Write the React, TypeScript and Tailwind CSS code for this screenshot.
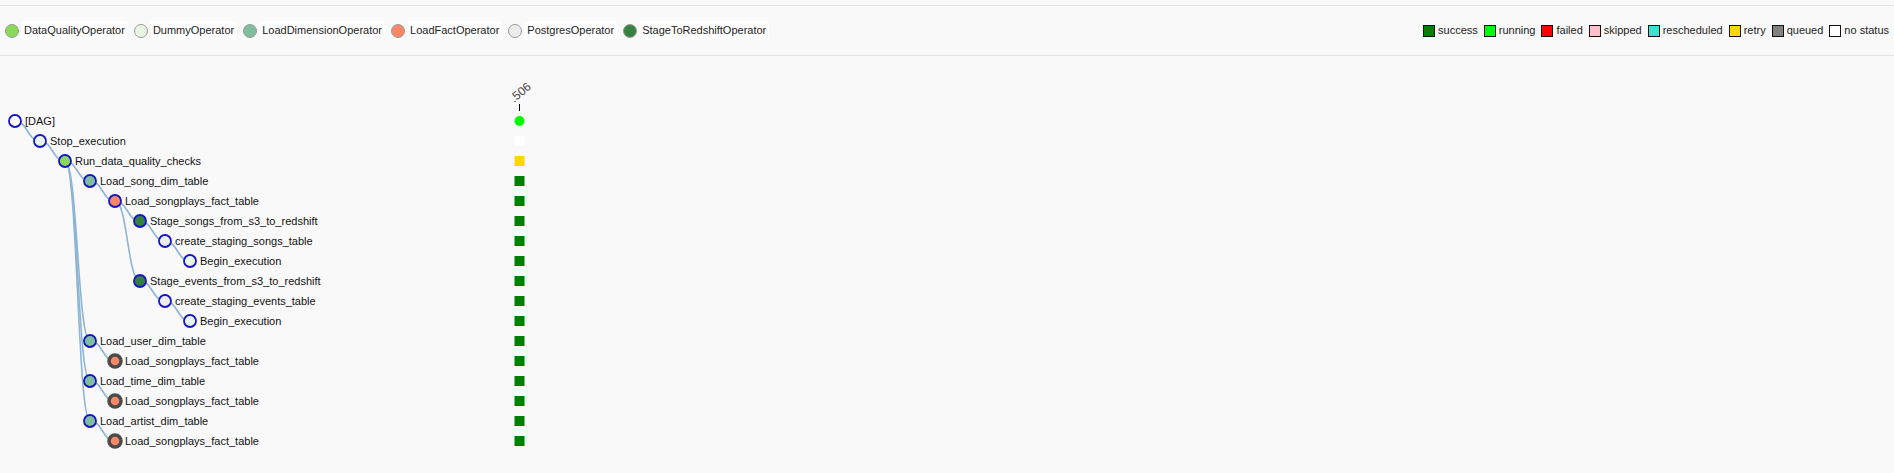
import React from "react";

interface INode {
  name: string;
  depth: number;
  parent: number;
  fill: string;
  collapsed?: boolean;
  status: string;
}

const OPERATORS = [
  { name: "DataQualityOperator", color: "#89DA59" },
  { name: "DummyOperator", color: "#e8f7e4" },
  { name: "LoadDimensionOperator", color: "#80BD9E" },
  { name: "LoadFactOperator", color: "#F98866" },
  { name: "PostgresOperator", color: "#ededed" },
  { name: "StageToRedshiftOperator", color: "#358140" },
];

const STATES = [
  { name: "success", color: "#008000" },
  { name: "running", color: "#00ff00" },
  { name: "failed", color: "#ff0000" },
  { name: "skipped", color: "#ffc0cb" },
  { name: "rescheduled", color: "#40e0d0" },
  { name: "retry", color: "#ffd700" },
  { name: "queued", color: "#808080" },
  { name: "no status", color: "#ffffff" },
];

const DQ = "#89DA59";
const DUMMY = "#e8f7e4";
const DIM = "#80BD9E";
const FACT = "#F98866";
const PG = "#ededed";
const STAGE = "#358140";
const OK = "#008000";

const NODES: INode[] = [
  { name: "[DAG]", depth: 0, parent: -1, fill: "#ffffff", status: "run" },
  { name: "Stop_execution", depth: 1, parent: 0, fill: DUMMY, status: "#ffffff" },
  { name: "Run_data_quality_checks", depth: 2, parent: 1, fill: DQ, status: "#ffd700" },
  { name: "Load_song_dim_table", depth: 3, parent: 2, fill: DIM, status: OK },
  { name: "Load_songplays_fact_table", depth: 4, parent: 3, fill: FACT, status: OK },
  { name: "Stage_songs_from_s3_to_redshift", depth: 5, parent: 4, fill: STAGE, status: OK },
  { name: "create_staging_songs_table", depth: 6, parent: 5, fill: PG, status: OK },
  { name: "Begin_execution", depth: 7, parent: 6, fill: DUMMY, status: OK },
  { name: "Stage_events_from_s3_to_redshift", depth: 5, parent: 4, fill: STAGE, status: OK },
  { name: "create_staging_events_table", depth: 6, parent: 8, fill: PG, status: OK },
  { name: "Begin_execution", depth: 7, parent: 9, fill: DUMMY, status: OK },
  { name: "Load_user_dim_table", depth: 3, parent: 2, fill: DIM, status: OK },
  { name: "Load_songplays_fact_table", depth: 4, parent: 11, fill: FACT, collapsed: true, status: OK },
  { name: "Load_time_dim_table", depth: 3, parent: 2, fill: DIM, status: OK },
  { name: "Load_songplays_fact_table", depth: 4, parent: 13, fill: FACT, collapsed: true, status: OK },
  { name: "Load_artist_dim_table", depth: 3, parent: 2, fill: DIM, status: OK },
  { name: "Load_songplays_fact_table", depth: 4, parent: 15, fill: FACT, collapsed: true, status: OK },
];

const TOP = 65;
const ROW = 20;
const COL_X = 519.5;

const nx = (n: INode) => 15 + n.depth * 25;
const ny = (i: number) => TOP + i * ROW;

function OperatorLegend() {
  return (
    <div className="flex items-center gap-[6px] pl-[5px]">
      {OPERATORS.map((op) => (
        <div key={op.name} className="flex items-center">
          <span
            className="block w-[14px] h-[14px] rounded-full border border-[#9a9a9a]"
            style={{ backgroundColor: op.color }}
          />
          <span className="ml-[2px] px-[3px] py-[3px] bg-white rounded-sm text-[11px] leading-[13px] text-[#222]">
            {op.name}
          </span>
        </div>
      ))}
    </div>
  );
}

function StateLegend() {
  return (
    <div className="flex items-center gap-[6px] pr-[5px]">
      {STATES.map((s) => (
        <div key={s.name} className="flex items-center gap-[3px]">
          <span
            className="block w-[12px] h-[12px] border border-[#111]"
            style={{ backgroundColor: s.color }}
          />
          <span className="text-[11px] leading-[13px] text-[#222]">{s.name}</span>
        </div>
      ))}
    </div>
  );
}

function TreeChart() {
  /* ----------- Links ----------- */
  const renderLinks = NODES.map((n, i) => {
    if (n.parent < 0) return null;
    const p = NODES[n.parent];
    const sx = nx(p);
    const sy = ny(n.parent);
    const tx = nx(n);
    const ty = ny(i);
    const mx = (sx + tx) / 2;
    return (
      <path
        key={"l" + i}
        d={`M${sx},${sy}C${mx},${sy} ${mx},${ty} ${tx},${ty}`}
        fill="none"
        stroke="#8db5d6"
        strokeWidth={1.6}
      />
    );
  });

  /* ----------- Nodes ----------- */
  const renderNodes = NODES.map((n, i) => (
    <g key={"n" + i}>
      <circle
        cx={nx(n)}
        cy={ny(i)}
        r={6}
        fill={n.fill}
        stroke={n.collapsed ? "#4a4a4a" : "#1414c8"}
        strokeWidth={n.collapsed ? 3.5 : 1.8}
      />
      <text x={nx(n) + 10} y={ny(i) + 3.8} fontSize={11} fill="#111">
        {n.name}
      </text>
    </g>
  ));

  /* ----------- Status column ----------- */
  const renderStatus = NODES.map((n, i) =>
    n.status === "run" ? (
      <circle key={"s" + i} cx={COL_X} cy={ny(i)} r={5} fill="#00ff00" />
    ) : (
      <rect key={"s" + i} x={COL_X - 5} y={ny(i) - 5} width={10} height={10} fill={n.status} />
    )
  );

  return (
    <svg width={1894} height={417} className="block">
      <text
        x={514}
        y={47}
        fontSize={12}
        fill="#444"
        transform="rotate(-40 514 47)"
      >
        .506
      </text>
      <line x1={COL_X} y1={48} x2={COL_X} y2={55} stroke="#000" strokeWidth={1} />
      {renderLinks}
      {renderNodes}
      {renderStatus}
    </svg>
  );
}

export default function App() {
  return (
    <div className="w-[1894px] h-[473px] overflow-hidden bg-[#f9f9f9] font-['Liberation_Sans',Arial,sans-serif]">
      <div className="mt-[5px] border-t border-[#e4e4e4]" />
      <div className="h-[49px] flex items-center justify-between">
        <OperatorLegend />
        <StateLegend />
      </div>
      <div className="border-t border-[#e4e4e4]" />
      <TreeChart />
    </div>
  );
}
